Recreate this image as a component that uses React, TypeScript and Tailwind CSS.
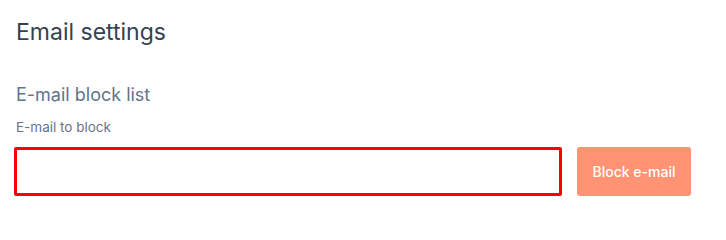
export default function App() {
  return (
    <div className="w-[726px] h-[221px] bg-white px-[14px] pt-[17px] font-['Inter',sans-serif]">
      <h1 className="text-[23px] leading-[30px] text-[#374151] pl-[2px]">Email settings</h1>
      <h2 className="mt-[36px] text-[18px] leading-[24px] text-[#64748b] pl-[2px]">E-mail block list</h2>
      <label className="block mt-[11px] text-[13.5px] leading-[18px] text-[#64748b] pl-[2px]">E-mail to block</label>
      <div className="mt-[11px] flex items-center gap-[15px] w-[677px]">
        <input className="flex-1 h-[49px] border-[3px] border-[#ff0000] rounded-[2px] outline-none px-3" />
        <button className="w-[114px] h-[49px] rounded-[3px] bg-[#ff9373] text-white text-[14px] font-medium">
          Block e-mail
        </button>
      </div>
    </div>
  );
}
